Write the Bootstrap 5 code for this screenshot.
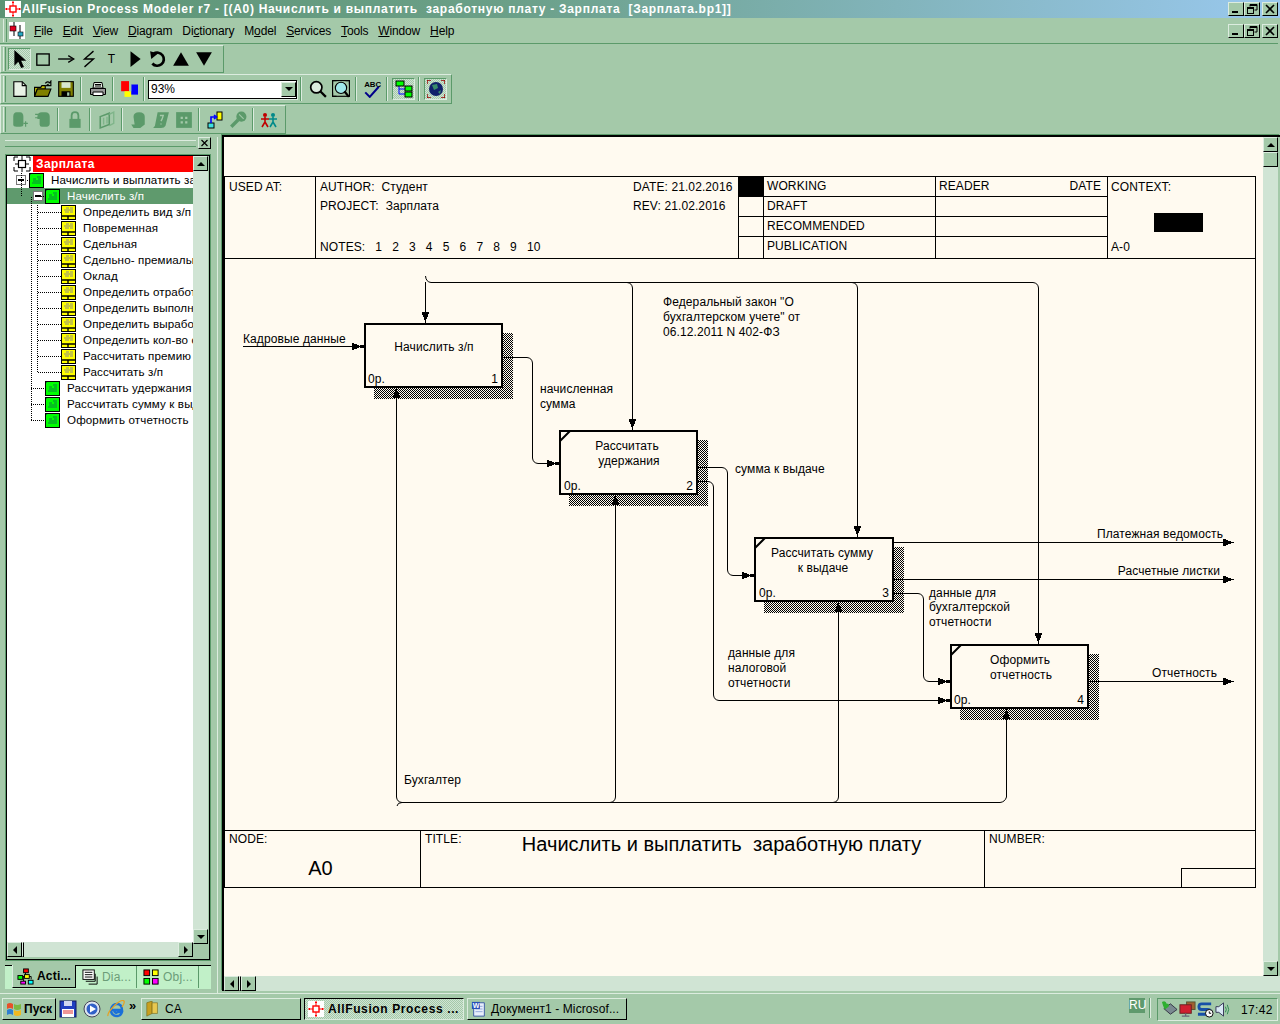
<!DOCTYPE html>
<html lang="ru">
<head>
<meta charset="UTF-8">
<title>AllFusion Process Modeler r7</title>
<link rel="stylesheet" href="https://cdn.jsdelivr.net/npm/bootstrap@5.3.0/dist/css/bootstrap.min.css">
<style>
:root { --fc: #a4c9a9; --dk: #5b9a6a; --lt: #d0e4d4; --hi: #dcecdf; --cream: #fffaf0; }
html, body { margin: 0; padding: 0; }
body { width: 1280px; height: 1024px; overflow: hidden; background: var(--fc); color: #000;
  font: 12px/14px "Liberation Sans", Arial, sans-serif; }
.app { width: 1280px; height: 1024px; }
.sprite { position: absolute; width: 0; height: 0; }

/* title and menu */
.titlebar { height: 18px; background: linear-gradient(90deg, #5c9474 0%, #6ba088 40%, #99c8ee 100%); color: #fff;
  font-weight: 700; font-size: 12px; letter-spacing: .72px; white-space: pre; padding-left: 5px; gap: 1px; }
.wbtn { width: 16px; height: 14px; background: var(--fc); border: 1px solid; border-color: var(--hi) #000 #000 var(--hi); }
.wbtn svg { width: 12px; height: 10px; display: block; margin: 1px; }
.wbtns { margin-left: auto; gap: 0; padding-right: 2px; }
.wbtns .wgap { margin-left: 2px; }
.menubar { height: 26px; border-bottom: 1px solid var(--dk); padding-left: 3px; margin-right: 2px; }
.grip { width: 4px; border-left: 1px solid var(--hi); border-right: 1px solid var(--dk); background: var(--fc); align-self: stretch; margin: 1px 0; }
.mlogo { width: 16px; height: 17px; margin: 0 4px 0 2px; background: #fff; }
.mitem { padding: 0 5px; font-size: 12px; letter-spacing: -.15px; }
.mitem u { text-underline-offset: 1px; }
.menubar .wbtns { padding-right: 0; margin-right: 0; }

/* toolbars */
.toolarea { height: 93px; padding-top: 1px; }
.toolrow { border: 1px solid; border-color: var(--hi) var(--dk) var(--dk) var(--hi); padding-left: 2px; }
.tr1 { width: 224px; height: 28px; margin-bottom: 1px; }
.tr2 { width: 452px; height: 30px; margin-bottom: 1px; }
.tr3 { width: 286px; height: 29px; }
.grip2 { width: 3px; border-left: 1px solid var(--hi); border-right: 1px solid var(--dk); align-self: stretch; margin: 1px 2px 1px 0; }
.tb { width: 23px; height: 22px; flex: none; }
.tb svg { width: 18px; height: 18px; }
.tb-press { background: repeating-conic-gradient(var(--lt) 0 25%, var(--fc) 0 50%) 0 0 / 2px 2px;
  border: 1px solid; border-color: var(--dk) var(--hi) var(--hi) var(--dk); }
.sep { width: 2px; flex: none; border-left: 1px solid var(--dk); border-right: 1px solid var(--hi); align-self: stretch; margin: 2px 3px; }
.sep-w { margin: 2px 4px 2px 3px; }
.combo { width: 149px; height: 19px; background: #fff; border: 1px solid #000; box-shadow: 1px 1px 0 var(--hi); flex: none; font-size: 12px; padding-left: 2px; }
.combo-b { width: 15px; height: 15px; margin: 1px 0 1px auto; background: var(--fc); border: 1px solid; border-color: var(--hi) #000 #000 var(--hi); }
.tri-d { width: 0; height: 0; border: 4px solid transparent; border-top-color: #000; border-bottom-width: 0; }
.tri-u { width: 0; height: 0; border: 4px solid transparent; border-bottom-color: #000; border-top-width: 0; }
.tri-l { width: 0; height: 0; border: 4px solid transparent; border-right-color: #000; border-left-width: 0; }
.tri-r { width: 0; height: 0; border: 4px solid transparent; border-left-color: #000; border-right-width: 0; }

/* workspace */
.workspace { height: 856px; }
.leftpane { width: 212px; flex: none; padding: 0 0 0 5px; }
.panehead { height: 18px; gap: 2px; }
.panelines { flex: 1; height: 7px; border-top: 1px solid var(--hi); border-bottom: 1px solid var(--dk); margin-top: 3px; position: relative; }
.xbtn { width: 13px; height: 12px; margin-top: 0; background: var(--fc); border: 1px solid; border-color: var(--hi) #000 #000 var(--hi); margin-right: 1px; }
.xbtn svg { width: 9px; height: 8px; display: block; margin: 1px; }
.treebox { width: 204px; height: 805px; border: 1px solid #000; border-left-color: #000; background: var(--fc); box-shadow: 0 0 0 1px var(--dk); margin-left: 1px; }
.treecol { width: 186px; flex: none; }
.tree { width: 186px; height: 786px; background: #fff; position: relative; overflow: hidden; }
.troot { height: 16px; position: relative; }
.troot svg { width: 18px; height: 16px; margin: 0 2px 0 6px; flex: none; }
.troot span { flex: 1; height: 16px; background: #f00; color: #fff; font-weight: 700; padding-left: 3px; font-size: 12px; letter-spacing: .4px; line-height: 16px; }
.trow { height: 16px; white-space: nowrap; position: relative; font-size: 11.6px; line-height: 16px; }
.trow svg { width: 15px; height: 15px; flex: none; }
.lv1 { padding-left: 22px; }
.lv2 { padding-left: 38px; }
.lv3 { padding-left: 54px; }
.trow span { padding-left: 7px; letter-spacing: .12px; }
.tsel { background: #5f9a6d; color: #fff; }
.treelines { position: absolute; left: 0; top: 0; width: 186px; height: 300px; pointer-events: none; }
.exp { position: absolute; width: 10px; height: 10px; background: #fff; border: 1px solid #777; top: 3px; }
.exp::after { content: ""; position: absolute; left: 1px; right: 1px; top: 3px; height: 2px; background: #000; }
.ex1 { left: 9px; }
.ex2 { left: 26px; }
.vscr { width: 15px; background: var(--lt); flex: none; }
.scb { width: 15px; height: 15px; background: var(--fc); border: 1px solid; border-color: var(--hi) #000 #000 var(--hi); flex: none; }
.hscr { height: 15px; background: var(--lt); flex: none; }
.corner { width: 15px; height: 15px; background: var(--fc); flex: none; }
.scthumb { height: 15px; background: var(--fc); border: 1px solid; border-color: var(--hi) #000 #000 var(--hi); flex: none; }
.tabs { height: 24px; margin-top: 5px; width: 206px; background: #c1f0c8; border-top: 1px solid #000; font-size: 12px; }
.tabgap { width: 7px; }
.tab { height: 22px; gap: 3px; color: #6c9d78; flex: none; letter-spacing: .2px; }
.tab svg { width: 17px; height: 17px; }
.tab-on { width: 64px; background: var(--fc); color: #000; font-weight: 700; border-bottom: 1px solid #000; border-right: 1px solid #000; border-left: 1px solid var(--hi); padding-left: 4px; margin-top: -1px; height: 23px; }
.tab-a { width: 61px; padding-left: 6px; border-right: 1px solid var(--dk); }
.tab-b { width: 62px; padding-left: 6px; border-right: 1px solid var(--dk); }
.split { width: 10px; flex: none; position: relative; }
.split::after { content: ""; position: absolute; left: 5px; top: 0; bottom: 0; width: 1px; background: var(--hi); }
.docpane { width: 1058px; flex: none; border-top: 2px solid #000; border-left: 2px solid #000; margin-top: -2px; height: 856px; box-shadow: -1px -1px 0 var(--dk); }
.viewrow { height: 839px; }
.viewport { width: 1039px; background: var(--cream); padding-top: 39px; flex: none; overflow: hidden; }
.vscr2 { width: 15px; flex: none; background: var(--lt); }
.vthumb { height: 15px; }

/* idef0 form */
.form { width: 1032px; height: 712px; border: 1px solid #000; font-size: 12px; letter-spacing: .1px; }
.fhead { height: 82px; border-bottom: 1px solid #000; flex: none; }
.c-used { width: 91px; border-right: 1px solid #000; padding: 3px 0 0 4px; }
.c-auth { width: 423px; border-right: 1px solid #000; padding: 3px 2px 0 4px; }
.auth-line { height: 19px; }
.auth-l { width: 313px; white-space: pre; }
.notes { margin-top: auto; padding-bottom: 4px; word-spacing: 1.6px; white-space: pre; }
.c-mark { width: 25px; border-right: 1px solid #000; }
.c-stat { width: 172px; border-right: 1px solid #000; }
.c-read { width: 172px; border-right: 1px solid #000; }
.strow { height: 20px; border-bottom: 1px solid #000; padding: 2px 6px 0 3px; flex: none; }
.strow:last-child { border-bottom: 0; height: 21px; flex: 1; }
.mk-on { background: #000; }
.c-ctx { flex: 1; padding: 3px 0 0 3px; position: relative; }
.ctxblk { width: 49px; height: 19px; background: #000; margin: 19px 0 0 43px; }
.ctxa { margin-top: auto; padding-bottom: 4px; }
.dsvg { display: block; width: 1030px; height: 571px; flex: none; }
.dsvg text { font: 12px "Liberation Sans", Arial, sans-serif; letter-spacing: .1px; fill: #000; }
.ln { fill: none; stroke: #000; stroke-width: 1; }
.bx { fill: var(--cream); stroke: #000; stroke-width: 2; }
.ffoot { flex: 1; border-top: 1px solid #000; min-height: 0; }
.c-node { width: 196px; border-right: 1px solid #000; padding: 1px 0 0 4px; position: relative; }
.a0 { font-size: 20px; line-height: 24px; text-align: center; margin: 10px 0 0 -4px; padding-right: 4px; letter-spacing: 0; }
.c-title { width: 564px; border-right: 1px solid #000; padding: 1px 0 0 4px; position: relative; }
.bigt { font-size: 20px; line-height: 24px; text-align: center; margin-top: -14px; letter-spacing: .02px; white-space: pre; padding-left: 34px; }
.c-num { flex: 1; padding: 1px 0 0 4px; position: relative; }
.numbox { position: absolute; right: 0; bottom: 0; width: 74px; height: 19px; border: 1px solid #000; border-right: 0; border-bottom: 0; }

/* taskbar */
.taskbar { height: 30px; border-top: 1px solid var(--hi); box-shadow: inset 0 1px 0 var(--fc); padding: 4px 2px 3px 2px; position: relative; }
.taskbar::before { content: ""; position: absolute; left: 0; right: 0; top: 1px; height: 1px; background: var(--fc); }
.startb { width: 54px; height: 22px; font-weight: 700; gap: 2px; padding-left: 3px; border: 1px solid; border-color: var(--hi) #000 #000 var(--hi); flex: none; letter-spacing: .1px; }
.startb svg { width: 16px; height: 16px; }
.ql { width: 24px; height: 22px; flex: none; }
.ql svg { width: 18px; height: 18px; }
.chev { width: 12px; height: 22px; font-size: 13px; font-weight: 700; line-height: 16px; flex: none; padding-left: 1px; }
.tsk { height: 22px; gap: 4px; padding-left: 3px; border: 1px solid; border-color: var(--hi) #000 #000 var(--hi); flex: none; white-space: nowrap; overflow: hidden; }
.tsk svg { width: 16px; height: 16px; flex: none; }
.t1 { width: 160px; margin-left: 1px; }
.t2 { width: 160px; margin-left: 3px; font-weight: 700; letter-spacing: .62px; background: repeating-conic-gradient(var(--lt) 0 25%, var(--fc) 0 50%) 0 0 / 2px 2px; border-color: #000 var(--hi) var(--hi) #000; }
.t3 { width: 160px; margin-left: 3px; letter-spacing: .1px; }
.rublk { width: 16px; height: 15px; background: #5f9a6d; color: #fff; margin-left: auto; font-size: 12px; line-height: 15px; text-align: center; }
.tsep { width: 2px; height: 20px; border-left: 1px solid var(--dk); border-right: 1px solid var(--hi); margin: 0 6px 0 4px; }
.tray { width: 121px; height: 23px; border: 1px solid; border-color: var(--dk) var(--hi) var(--hi) var(--dk); gap: 1px; padding-left: 3px; flex: none; margin-left: 0; }
.tray svg { width: 17px; height: 17px; flex: none; }
.clock { margin-left: 8px; letter-spacing: .35px; }
</style>
</head>
<body>
<svg class="sprite" aria-hidden="true" shape-rendering="crispEdges">
  <defs>
    <pattern id="dith" width="2" height="2" patternUnits="userSpaceOnUse"><rect width="2" height="2" fill="#fffaf0"/><rect width="1" height="1" fill="#000"/><rect x="1" y="1" width="1" height="1" fill="#000"/></pattern>
    <marker id="ah" markerUnits="userSpaceOnUse" markerWidth="13" markerHeight="10" refX="12" refY="5" orient="auto"><path d="M0 1L9 5L0 9Z M8 3.5H12V6.5H8Z" fill="#000"/></marker>
    <marker id="ao" markerUnits="userSpaceOnUse" markerWidth="13" markerHeight="10" refX="11" refY="5" orient="auto"><path d="M0 1L10 5L0 9Z" fill="#000"/></marker>
  </defs>
  <symbol id="i-logo" viewBox="0 0 16 16"><rect width="16" height="16" fill="#fff"/><path d="M8 0V5M8 11V16M0 8H5M11 8H16" stroke="#f00" fill="none"/><rect x="5" y="5" width="6" height="6" fill="#fff" stroke="#f00" stroke-width="1.4"/><path d="M7 2H9V1H7ZM7 14H9V15H7ZM2 7V9H1V7ZM14 7V9H15V7Z" fill="#f00"/></symbol>
  <symbol id="i-mlogo" viewBox="0 0 16 17"><path d="M5 0V14M11 3V17" stroke="#000" fill="none"/><rect x="1" y="4" width="6" height="5" fill="#e00020" stroke="#000" stroke-width=".6"/><rect x="9" y="10" width="5" height="4" fill="#27a9c4" stroke="#000" stroke-width=".6"/></symbol>
  <symbol id="i-green" viewBox="0 0 15 15"><rect x=".5" y=".5" width="14" height="14" fill="#0f0" stroke="#000"/><path d="M2 1L1 2M8 4H12M4 6H7M9 6H12M4 8H12M3 10H12" stroke="#0a8040" fill="none"/></symbol>
  <symbol id="i-yellow" viewBox="0 0 15 15"><rect x=".5" y=".5" width="14" height="14" fill="#ff0" stroke="#000"/><path d="M5 3H8M9 3H12M3 5H12M4 7H8M9 7H12" stroke="#888" fill="none"/><path d="M0 11H15M7 11V15" stroke="#000" fill="none" stroke-width="1.4"/></symbol>
  <symbol id="i-proj" viewBox="0 0 18 16"><path d="M1 5V1H5M13 1H17V5M1 11V15H5M13 15H17V11M9 0V4M9 12V16M2 8H5M13 8H16" stroke="#000" fill="none"/><rect x="5.5" y="4.5" width="7" height="7" fill="#fff" stroke="#000" stroke-width="1.2"/></symbol>
  <symbol id="t-ptr" viewBox="0 0 16 16"><path d="M3 0V14L6.5 10.5L9 16L11.5 15L9 9.5H13.500Z" fill="#000"/></symbol>
  <symbol id="t-rect" viewBox="0 0 16 16"><rect x="2.500" y="3.500" width="11" height="10" fill="none" stroke="#000" stroke-width="1.200"/></symbol>
  <symbol id="t-arr" viewBox="0 0 16 16"><path d="M1 8H14" stroke="#000" stroke-width="1.200"/><path d="M10 5L15 8L10 11" fill="none" stroke="#000" stroke-width="1.200"/></symbol>
  <symbol id="t-sq" viewBox="0 0 16 16"><path d="M12 1L4 8H12L4 15" fill="none" stroke="#000" stroke-width="1.200"/></symbol>
  <symbol id="t-play" viewBox="0 0 16 16"><path d="M4 1L13 8L4 15Z" fill="#000"/></symbol>
  <symbol id="t-rot" viewBox="0 0 16 16"><path d="M4 3.500A5.800 5.800 0 1 1 3 12" fill="none" stroke="#000" stroke-width="2.400"/><path d="M1 1L8 3L2 8Z" fill="#000"/></symbol>
  <symbol id="t-up" viewBox="0 0 16 16"><path d="M8 2L15 14H1Z" fill="#000"/></symbol>
  <symbol id="t-down" viewBox="0 0 16 16"><path d="M1 2H15L8 14Z" fill="#000"/></symbol>
  <symbol id="t-new" viewBox="0 0 16 16"><path d="M2.500 1.500H10L13.500 5V14.500H2.500Z" fill="#e8f2e6" stroke="#000"/><path d="M10 1.500V5H13.500" fill="none" stroke="#000"/></symbol>
  <symbol id="t-open" viewBox="0 0 16 16"><path d="M.5 6.500H6L7 5H10V8H3L.5 14.500Z" fill="#c8c800" stroke="#000"/><path d="M.5 14.500L3 8H15L12.500 14.500Z" fill="#808000" stroke="#000"/><path d="M10 3Q12 .5 14 2.500L15 1V5H11L13 3.500" fill="none" stroke="#000"/></symbol>
  <symbol id="t-save" viewBox="0 0 16 16"><rect x="1.500" y="1.500" width="13" height="13" fill="#808000" stroke="#000"/><rect x="4" y="2" width="8" height="5" fill="#d8e8d0"/><rect x="4" y="10" width="8" height="4.500" fill="#000"/><rect x="9" y="11" width="2" height="3" fill="#a4c9a9"/></symbol>
  <symbol id="t-print" viewBox="0 0 18 16"><path d="M5 1.500H13L14 7H4Z" fill="#e8f2e6" stroke="#000"/><path d="M1.500 7.500H16.500V13.500H1.500Z" fill="#9a9a9a" stroke="#000"/><path d="M4 11H14V14.500H4Z" fill="#fff" stroke="#000"/><path d="M6 3.500H12M6 5H12" stroke="#000" fill="none"/></symbol>
  <symbol id="t-col" viewBox="0 0 16 16"><rect x="1" y="1" width="7" height="9" fill="#f00"/><rect x="4" y="10" width="6" height="5" fill="#ff0"/><rect x="10" y="4" width="6" height="9" fill="#00f"/><rect x="8" y="4" width="2" height="6" fill="#a4c9a9"/></symbol>
  <symbol id="t-zoom" viewBox="0 0 16 16"><circle cx="6.500" cy="6.500" r="5" fill="#dcecdf" stroke="#000" stroke-width="1.500"/><path d="M10 10L15 15" stroke="#000" stroke-width="2"/></symbol>
  <symbol id="t-fit" viewBox="0 0 16 16"><path d="M.5 4V.5H4M12 .5H15.500V4M.5 11V14.500H4" fill="none" stroke="#000"/><rect x=".5" y=".5" width="15" height="14" fill="none" stroke="#000"/><circle cx="8" cy="7" r="5" fill="#9fe8ea" stroke="#000"/><path d="M11 10L15 15" stroke="#000" stroke-width="2"/></symbol>
  <symbol id="t-abc" viewBox="0 0 16 16"><text x="1" y="6.500" font-family="Liberation Sans" font-size="7" font-weight="700" fill="#000">ABC</text><path d="M2 11L6 15L14 6" fill="none" stroke="#00008a" stroke-width="1.800"/></symbol>
  <symbol id="t-tree" viewBox="0 0 18 18"><path d="M4 6V14H10M4 9H10" fill="none" stroke="#00f"/><rect x="1" y="1" width="8" height="5" fill="#0f0" stroke="#000"/><rect x="10" y="6" width="7" height="5" fill="#0f0" stroke="#000"/><rect x="10" y="12" width="7" height="5" fill="#0f0" stroke="#000"/></symbol>
  <symbol id="t-globe" viewBox="0 0 18 18"><circle cx="9" cy="9" r="7" fill="#10206a"/><path d="M5 5L10 4L11 8L7 10ZM11 12L14 10L13 14Z" fill="#3a8c6a"/><path d="M0 4V0H4M14 0H18V4M0 14V18H4M14 18H18V14" fill="none" stroke="#900" stroke-width="1.400"/></symbol>
  <symbol id="d-a" viewBox="0 0 16 16"><path d="M2 5Q2 1 5 1H8Q11 1 11 5V12Q11 14 8 14H5Q2 14 2 12Z" fill="#5b9a6a"/><path d="M11 11H15M13 9V14" stroke="#5b9a6a" fill="none"/></symbol>
  <symbol id="d-b" viewBox="0 0 16 16"><path d="M3 5Q3 1 7 1H10Q14 1 14 5V11Q14 14 10 14H7Q5 14 5 12V7H3Z" fill="#5b9a6a"/><path d="M1 3H5M1 6H4" stroke="#5b9a6a" fill="none"/></symbol>
  <symbol id="d-lock" viewBox="0 0 16 16"><rect x="3" y="7" width="10" height="8" fill="#5b9a6a"/><path d="M5 7V4Q5 1 8 1Q11 1 11 4V7" fill="none" stroke="#5b9a6a" stroke-width="1.600"/></symbol>
  <symbol id="d-book" viewBox="0 0 16 16"><path d="M2 5L10 2V12L2 15Z" fill="none" stroke="#5b9a6a" stroke-width="1.400"/><path d="M10 3L14 1V11L10 13M5 6V12M8 5V11" fill="none" stroke="#7fb58a" stroke-width="1.200"/></symbol>
  <symbol id="d-blob" viewBox="0 0 16 16"><path d="M4 5Q4 1 9 1Q14 1 14 5V12L10 15H4L2 12H5Z" fill="#5b9a6a"/></symbol>
  <symbol id="d-scroll" viewBox="0 0 16 16"><path d="M5 1H15L12 13Q11 15 8 15H1Q3 14 3 11Z" fill="#5b9a6a"/><path d="M7 4L10 4L9 7L8 9M8 11V12" stroke="#a4c9a9" fill="none" stroke-width="1.200"/></symbol>
  <symbol id="d-grid" viewBox="0 0 16 16"><rect x="1" y="1" width="14" height="14" fill="#5b9a6a"/><path d="M5 5H7V7H5ZM9 5H11V7H9ZM5 9H7V11H5ZM9 9H11V11H9Z" fill="#a4c9a9"/></symbol>
  <symbol id="d-db" viewBox="0 0 18 18"><rect x="11" y="1" width="5" height="8" fill="#ff0" stroke="#000"/><rect x="2" y="12" width="6" height="5" fill="#40e0e0" stroke="#000"/><path d="M5 12V6H9M8 4L10.500 6L8 8" fill="none" stroke="#00f" stroke-width="1.600"/></symbol>
  <symbol id="d-key" viewBox="0 0 16 16"><circle cx="11" cy="5" r="4.500" fill="#5b9a6a"/><path d="M8 8L2 14" stroke="#5b9a6a" stroke-width="3"/><path d="M9 3L13 7" stroke="#a4c9a9"/></symbol>
  <symbol id="d-ppl" viewBox="0 0 18 16"><circle cx="5" cy="3" r="2" fill="#c00000"/><path d="M5 5V10L2 15M5 10L8 15M1 7H9" stroke="#c00000" stroke-width="1.600" fill="none"/><circle cx="13" cy="3" r="2" fill="#008a8a"/><path d="M13 5V10L10 15M13 10L16 15M9 7H17" stroke="#008a8a" stroke-width="1.600" fill="none"/></symbol>
  <symbol id="w-min" viewBox="0 0 12 10"><rect x="2" y="7" width="6" height="2" fill="#000"/></symbol>
  <symbol id="w-res" viewBox="0 0 12 10"><path d="M4 2.500V.5H11V6H8.500M4 1.500H11" fill="none" stroke="#000"/><rect x="1.500" y="3.500" width="6" height="6" fill="none" stroke="#000"/><path d="M1 4.500H8" stroke="#000"/></symbol>
  <symbol id="w-x" viewBox="0 0 12 10"><path d="M2 1L10 9M10 1L2 9" stroke="#000" stroke-width="1.600"/></symbol>
  <symbol id="b-win" viewBox="0 0 16 16"><path d="M1 3Q4 1 7 3V8Q4 6 1 8Z" fill="#e8502a"/><path d="M8 3Q11 5 15 3V8Q11 10 8 8Z" fill="#7cb842"/><path d="M1 9Q4 7 7 9V14Q4 12 1 14Z" fill="#2f7fd0"/><path d="M8 9Q11 11 15 9V14Q11 16 8 14Z" fill="#f0b820"/></symbol>
  <symbol id="b-disk" viewBox="0 0 18 18"><rect x="1" y="1" width="16" height="16" fill="#2040c0" stroke="#101860"/><rect x="5" y="1" width="8" height="5" fill="#d0d8f0"/><rect x="3" y="9" width="12" height="8" fill="#fff"/><path d="M4 11H14M4 13H14" stroke="#e03030"/></symbol>
  <symbol id="b-wmp" viewBox="0 0 18 18"><circle cx="9" cy="9" r="8" fill="#dde6f0" stroke="#445"/><circle cx="9" cy="9" r="5.500" fill="#3060c8"/><path d="M7 5.500L13 9L7 12.500Z" fill="#fff"/></symbol>
  <symbol id="b-ie" viewBox="0 0 18 18"><path d="M4 10H15Q15 4 10 4Q5 4 4 10Q4 16 10 16Q14 16 15 12H11Q9 14 7 11" fill="none" stroke="#1a70d8" stroke-width="2.400"/><path d="M1 16Q0 13 8 5Q15 -1 17 1Q18 3 15 7" fill="none" stroke="#e8a020" stroke-width="1.300"/></symbol>
  <symbol id="b-fold" viewBox="0 0 16 18"><path d="M1 2L7 0V14L1 17Z" fill="#c8a020" stroke="#6a5a10" stroke-width=".6"/><path d="M7 2H13V14H7Z" fill="#e8c850" stroke="#6a5a10" stroke-width=".6"/></symbol>
  <symbol id="b-word" viewBox="0 0 16 18"><path d="M2 2H14V17H2Z" fill="#e8eefc" stroke="#3050a0"/><path d="M4 6H12M4 9H12M4 12H12" stroke="#8aa0d8"/><rect x="0" y="1" width="9" height="8" fill="#2850b8"/><text x="1" y="8" font-size="8" font-weight="700" font-family="Liberation Sans" fill="#fff">W</text></symbol>
  <symbol id="s-1" viewBox="0 0 18 18"><path d="M3 8L10 14L17 9L10 3Z" fill="#7a8a90" stroke="#334"/><path d="M1 1Q5 -1 6 3Q9 2 8 6L4 9Q2 5 1 1Z" fill="#2fb030"/></symbol>
  <symbol id="s-2" viewBox="0 0 18 18"><rect x="8" y="1" width="9" height="8" fill="#a06030" stroke="#553"/><rect x="1" y="4" width="12" height="9" fill="#d02030" stroke="#622"/><path d="M7 13V16M3 16H11" stroke="#667" stroke-width="1.400"/></symbol>
  <symbol id="s-3" viewBox="0 0 18 18"><path d="M15 3H5Q2 3 2 6T5 9H11Q14 9 14 11T11 14H1" fill="none" stroke="#1850a8" stroke-width="3"/><circle cx="13" cy="13" r="4" fill="#fff" stroke="#000"/><path d="M13 11V13H15" fill="none" stroke="#000"/></symbol>
  <symbol id="s-4" viewBox="0 0 18 18"><path d="M1 6H4L9 2V16L4 12H1Z" fill="#d8e8f4" stroke="#335"/><path d="M11 6Q13 9 11 12M13 4Q16 9 13 14" fill="none" stroke="#2a8a50"/></symbol>
  <symbol id="tb-act" viewBox="0 0 18 18"><path d="M9 5V9M3 12V9H15V12M7 9V14" stroke="#000" fill="none"/><rect x="7" y="1" width="5" height="4" fill="#f00" stroke="#000"/><rect x="1" y="8" width="5" height="4" fill="#0f0" stroke="#000"/><rect x="8" y="7" width="5" height="4" fill="#ff0" stroke="#000"/><rect x="4" y="14" width="5" height="3" fill="#f0f" stroke="#000"/><rect x="12" y="13" width="5" height="4" fill="#0ff" stroke="#000"/></symbol>
  <symbol id="tb-dia" viewBox="0 0 18 18"><rect x="1" y="1" width="12" height="10" fill="#fff" stroke="#000"/><path d="M3 3.500H11M3 6H11M3 8.500H11" stroke="#000"/><path d="M14 5V13H4M16 8V16H7" fill="none" stroke="#000"/></symbol>
  <symbol id="tb-obj" viewBox="0 0 18 18"><rect x="1" y="1" width="6" height="6" fill="#f00" stroke="#000"/><rect x="10" y="1" width="6" height="6" fill="#ff0" stroke="#000"/><rect x="1" y="10" width="6" height="6" fill="#0f0" stroke="#000"/><rect x="10" y="10" width="6" height="6" fill="#f0f" stroke="#000"/></symbol>
</svg>

<div class="app d-flex flex-column">
  <!-- title -->
  <div class="titlebar d-flex align-items-center">
    <svg width="16" height="16" class="flex-none me-0"><use href="#i-logo"/></svg>
    <span>AllFusion Process Modeler r7 - [(A0) Начислить и выплатить  заработную плату - Зарплата  [Зарплата.bp1]]</span>
    <div class="wbtns d-flex">
      <div class="wbtn"><svg><use href="#w-min"/></svg></div>
      <div class="wbtn"><svg><use href="#w-res"/></svg></div>
      <div class="wbtn wgap"><svg><use href="#w-x"/></svg></div>
    </div>
  </div>

  <!-- menu -->
  <div class="menubar d-flex align-items-center">
    <div class="grip"></div>
    <svg class="mlogo"><use href="#i-mlogo"/></svg>
    <div class="mitem"><u>F</u>ile</div>
    <div class="mitem"><u>E</u>dit</div>
    <div class="mitem"><u>V</u>iew</div>
    <div class="mitem"><u>D</u>iagram</div>
    <div class="mitem">Di<u>c</u>tionary</div>
    <div class="mitem">M<u>o</u>del</div>
    <div class="mitem"><u>S</u>ervices</div>
    <div class="mitem"><u>T</u>ools</div>
    <div class="mitem"><u>W</u>indow</div>
    <div class="mitem"><u>H</u>elp</div>
    <div class="wbtns d-flex">
      <div class="wbtn"><svg><use href="#w-min"/></svg></div>
      <div class="wbtn"><svg><use href="#w-res"/></svg></div>
      <div class="wbtn wgap"><svg><use href="#w-x"/></svg></div>
    </div>
  </div>

  <!-- toolbars -->
  <div class="toolarea">
    <div class="toolrow tr1 d-flex align-items-center">
      <div class="grip2"></div>
      <div class="tb tb-press d-flex align-items-center justify-content-center"><svg><use href="#t-ptr"/></svg></div>
      <div class="tb d-flex align-items-center justify-content-center"><svg><use href="#t-rect"/></svg></div>
      <div class="tb d-flex align-items-center justify-content-center"><svg><use href="#t-arr"/></svg></div>
      <div class="tb d-flex align-items-center justify-content-center"><svg><use href="#t-sq"/></svg></div>
      <div class="tb d-flex align-items-center justify-content-center ttool">T</div>
      <div class="tb d-flex align-items-center justify-content-center"><svg><use href="#t-play"/></svg></div>
      <div class="tb d-flex align-items-center justify-content-center"><svg><use href="#t-rot"/></svg></div>
      <div class="tb d-flex align-items-center justify-content-center"><svg><use href="#t-up"/></svg></div>
      <div class="tb d-flex align-items-center justify-content-center"><svg><use href="#t-down"/></svg></div>
    </div>
    <div class="toolrow tr2 d-flex align-items-center">
      <div class="grip2"></div>
      <div class="tb d-flex align-items-center justify-content-center"><svg><use href="#t-new"/></svg></div>
      <div class="tb d-flex align-items-center justify-content-center"><svg><use href="#t-open"/></svg></div>
      <div class="tb d-flex align-items-center justify-content-center"><svg><use href="#t-save"/></svg></div>
      <div class="sep sep-w"></div>
      <div class="tb d-flex align-items-center justify-content-center"><svg><use href="#t-print"/></svg></div>
      <div class="sep"></div>
      <div class="tb d-flex align-items-center justify-content-center"><svg><use href="#t-col"/></svg></div>
      <div class="sep"></div>
      <div class="combo d-flex align-items-center">93%<div class="combo-b d-flex align-items-center justify-content-center"><div class="tri-d"></div></div></div>
      <div class="sep sep-w"></div>
      <div class="tb d-flex align-items-center justify-content-center"><svg><use href="#t-zoom"/></svg></div>
      <div class="tb d-flex align-items-center justify-content-center"><svg><use href="#t-fit"/></svg></div>
      <div class="sep"></div>
      <div class="tb d-flex align-items-center justify-content-center"><svg><use href="#t-abc"/></svg></div>
      <div class="sep sep-w"></div>
      <div class="tb tb-press d-flex align-items-center justify-content-center"><svg><use href="#t-tree"/></svg></div>
      <div class="sep sep-w"></div>
      <div class="tb tb-press d-flex align-items-center justify-content-center"><svg><use href="#t-globe"/></svg></div>
    </div>
    <div class="toolrow tr3 d-flex align-items-center">
      <div class="grip2"></div>
      <div class="tb d-flex align-items-center justify-content-center"><svg><use href="#d-a"/></svg></div>
      <div class="tb d-flex align-items-center justify-content-center"><svg><use href="#d-b"/></svg></div>
      <div class="sep sep-w"></div>
      <div class="tb d-flex align-items-center justify-content-center"><svg><use href="#d-lock"/></svg></div>
      <div class="sep sep-w"></div>
      <div class="tb d-flex align-items-center justify-content-center"><svg><use href="#d-book"/></svg></div>
      <div class="sep"></div>
      <div class="tb d-flex align-items-center justify-content-center"><svg><use href="#d-blob"/></svg></div>
      <div class="tb d-flex align-items-center justify-content-center"><svg><use href="#d-scroll"/></svg></div>
      <div class="tb d-flex align-items-center justify-content-center"><svg><use href="#d-grid"/></svg></div>
      <div class="sep"></div>
      <div class="tb d-flex align-items-center justify-content-center"><svg><use href="#d-db"/></svg></div>
      <div class="tb d-flex align-items-center justify-content-center"><svg><use href="#d-key"/></svg></div>
      <div class="sep"></div>
      <div class="tb d-flex align-items-center justify-content-center"><svg><use href="#d-ppl"/></svg></div>
    </div>
  </div>

  <!-- workspace -->
  <div class="workspace d-flex">
    <div class="leftpane">
      <div class="panehead d-flex">
        <div class="panelines"></div>
        <div class="xbtn"><svg><use href="#w-x"/></svg></div>
      </div>
      <div class="treebox d-flex flex-wrap">
        <div class="treecol">
          <div class="tree">
            <div class="troot d-flex align-items-center"><svg><use href="#i-proj"/></svg><span>Зарплата</span></div>
            <div class="trow lv1 d-flex align-items-center"><div class="exp ex1"></div><svg><use href="#i-green"/></svg><span>Начислить и выплатить  заработную плату</span></div>
            <div class="trow lv2 tsel d-flex align-items-center"><div class="exp ex2"></div><svg><use href="#i-green"/></svg><span>Начислить з/п</span></div>
            <div class="trow lv3 d-flex align-items-center"><svg><use href="#i-yellow"/></svg><span>Определить вид з/п</span></div>
            <div class="trow lv3 d-flex align-items-center"><svg><use href="#i-yellow"/></svg><span>Повременная</span></div>
            <div class="trow lv3 d-flex align-items-center"><svg><use href="#i-yellow"/></svg><span>Сдельная</span></div>
            <div class="trow lv3 d-flex align-items-center"><svg><use href="#i-yellow"/></svg><span>Сдельно- премиальная</span></div>
            <div class="trow lv3 d-flex align-items-center"><svg><use href="#i-yellow"/></svg><span>Оклад</span></div>
            <div class="trow lv3 d-flex align-items-center"><svg><use href="#i-yellow"/></svg><span>Определить отработанное</span></div>
            <div class="trow lv3 d-flex align-items-center"><svg><use href="#i-yellow"/></svg><span>Определить выполнение</span></div>
            <div class="trow lv3 d-flex align-items-center"><svg><use href="#i-yellow"/></svg><span>Определить выработку</span></div>
            <div class="trow lv3 d-flex align-items-center"><svg><use href="#i-yellow"/></svg><span>Определить кол-во отпускных</span></div>
            <div class="trow lv3 d-flex align-items-center"><svg><use href="#i-yellow"/></svg><span>Рассчитать  премию</span></div>
            <div class="trow lv3 d-flex align-items-center"><svg><use href="#i-yellow"/></svg><span>Рассчитать з/п</span></div>
            <div class="trow lv2 d-flex align-items-center"><svg><use href="#i-green"/></svg><span>Рассчитать  удержания</span></div>
            <div class="trow lv2 d-flex align-items-center"><svg><use href="#i-green"/></svg><span>Рассчитать сумму  к выдаче</span></div>
            <div class="trow lv2 d-flex align-items-center"><svg><use href="#i-green"/></svg><span>Оформить  отчетность</span></div>
            <svg class="treelines" viewBox="0 0 186 300" shape-rendering="crispEdges">
              <g fill="none" stroke="#000" stroke-dasharray="1 1">
                <path d="M14.500 17V40M20 24.500H22M24 41V265M30 40.500H38"/>
                <path d="M30.500 49V217M31 56.500H54M31 72.500H54M31 88.500H54M31 104.500H54M31 120.500H54M31 136.500H54M31 152.500H54M31 168.500H54M31 184.500H54M31 200.500H54M31 216.500H54"/>
                <path d="M24 232.500H38M24 248.500H38M24 264.500H38"/>
              </g>
            </svg>
          </div>
          <div class="hscr d-flex">
            <div class="scb d-flex align-items-center justify-content-center"><div class="tri-l"></div></div>
            <div class="scthumb thumb-l"></div>
            <div class="scb ms-auto d-flex align-items-center justify-content-center"><div class="tri-r"></div></div>
          </div>
        </div>
        <div class="vscr d-flex flex-column">
          <div class="scb d-flex align-items-center justify-content-center"><div class="tri-u tri-dim"></div></div>
          <div class="scb mt-auto d-flex align-items-center justify-content-center"><div class="tri-d tri-dim"></div></div>
          <div class="corner"></div>
        </div>
      </div>
      <div class="tabs d-flex">
        <div class="tabgap"></div>
        <div class="tab tab-on d-flex align-items-center"><svg><use href="#tb-act"/></svg>Acti...</div>
        <div class="tab tab-a d-flex align-items-center"><svg><use href="#tb-dia"/></svg>Dia...</div>
        <div class="tab tab-b d-flex align-items-center"><svg><use href="#tb-obj"/></svg>Obj...</div>
      </div>
    </div>
    <div class="split"></div>

    <!-- document -->
    <div class="docpane">
      <div class="viewrow d-flex">
        <div class="viewport">
          <div class="form d-flex flex-column">
            <div class="fhead d-flex">
              <div class="c-used">USED AT:</div>
              <div class="c-auth d-flex flex-column">
                <div class="auth-line d-flex"><div class="auth-l">AUTHOR:  Студент</div><div>DATE:  21.02.2016</div></div>
                <div class="auth-line d-flex"><div class="auth-l">PROJECT:  Зарплата</div><div>REV:    21.02.2016</div></div>
                <div class="notes">NOTES:  1  2  3  4  5  6  7  8  9  10</div>
              </div>
              <div class="c-mark d-flex flex-column">
                <div class="strow mk-on"></div><div class="strow"></div><div class="strow"></div><div class="strow"></div>
              </div>
              <div class="c-stat d-flex flex-column">
                <div class="strow">WORKING</div><div class="strow">DRAFT</div><div class="strow">RECOMMENDED</div><div class="strow">PUBLICATION</div>
              </div>
              <div class="c-read d-flex flex-column">
                <div class="strow d-flex justify-content-between"><span>READER</span><span>DATE</span></div><div class="strow"></div><div class="strow"></div><div class="strow"></div>
              </div>
              <div class="c-ctx d-flex flex-column">
                <div>CONTEXT:</div>
                <div class="ctxblk"></div>
                <div class="ctxa">A-0</div>
              </div>
            </div>

            <svg class="dsvg" viewBox="225 259 1030 571">
              <g shape-rendering="crispEdges">
                <rect x="374" y="333" width="139" height="66" fill="url(#dith)"/>
                <rect x="569" y="440" width="139" height="66" fill="url(#dith)"/>
                <rect x="764" y="547" width="140" height="66" fill="url(#dith)"/>
                <rect x="960" y="654" width="139" height="66" fill="url(#dith)"/>
              </g>
              <g class="arrows">
                <!-- control -->
                <path class="ln" d="M425.500 276Q426 282 431 282.500H1033Q1038 283 1038.500 288V644" marker-end="url(#ao)"/>
                <path class="ln" d="M425.500 282V323" marker-end="url(#ao)"/>
                <path class="ln" d="M627 282.500Q632 283 632.500 288V430" marker-end="url(#ao)"/>
                <path class="ln" d="M852 282.500Q857 283 857.500 288V537" marker-end="url(#ao)"/>
                <!-- inputs, outputs -->
                <path class="ln" d="M243 346.500H364" marker-end="url(#ah)"/>
                <path class="ln" d="M502 357.500H527Q532 358 532.500 363V458Q533 463 538 463.500H559" marker-end="url(#ah)"/>
                <path class="ln" d="M697 467.500H722Q727 468 727.500 473V570Q728 575 733 575.500H754" marker-end="url(#ah)"/>
                <path class="ln" d="M697 481.500H708Q713 482 713.500 487V695Q714 700 719 700.500H950" marker-end="url(#ah)"/>
                <path class="ln" d="M893 542.500H1234" marker-end="url(#ao)"/>
                <path class="ln" d="M893 579.500H1234" marker-end="url(#ao)"/>
                <path class="ln" d="M893 593.500H918Q923 594 923.500 599V676Q924 681 929 681.500H950" marker-end="url(#ah)"/>
                <path class="ln" d="M1088 681.500H1234" marker-end="url(#ao)"/>
                <!-- mechanisms -->
                <path class="ln" d="M397 806Q397.500 802.500 402 802.500H1000Q1005 802 1006.500 797V708" marker-end="url(#ao)"/>
                <path class="ln" d="M402 802.500Q397 802 396.500 797V387" marker-end="url(#ao)"/>
                <path class="ln" d="M610 802.500Q615 802 615.500 797V494" marker-end="url(#ao)"/>
                <path class="ln" d="M833 802.500Q838 802 838.500 797V601" marker-end="url(#ao)"/>
              </g>
              <!-- boxes -->
              <g shape-rendering="crispEdges">
                <rect class="bx" x="365" y="324" width="137" height="63"/>
                <rect class="bx" x="560" y="431" width="137" height="63"/>
                <rect class="bx" x="755" y="538" width="138" height="63"/>
                <rect class="bx" x="951" y="645" width="137" height="63"/>
              </g>
              <path d="M560 441L570 431M755 548L765 538M951 655L961 645" stroke="#000" stroke-width="2" fill="none"/>
              <g>
                <text x="434" y="351" text-anchor="middle">Начислить з/п</text>
                <text x="368" y="383">0р.</text><text x="498" y="383" text-anchor="end">1</text>
                <text x="627" y="450" text-anchor="middle">Рассчитать</text><text x="629" y="465" text-anchor="middle">удержания</text>
                <text x="564" y="490">0р.</text><text x="693" y="490" text-anchor="end">2</text>
                <text x="822" y="557" text-anchor="middle">Рассчитать сумму</text><text x="823" y="572" text-anchor="middle">к выдаче</text>
                <text x="759" y="597">0р.</text><text x="889" y="597" text-anchor="end">3</text>
                <text x="1020" y="664" text-anchor="middle">Оформить</text><text x="1021" y="679" text-anchor="middle">отчетность</text>
                <text x="954" y="704">0р.</text><text x="1084" y="704" text-anchor="end">4</text>
                <text x="243" y="343">Кадровые данные</text>
                <text x="540" y="393">начисленная</text><text x="540" y="408">сумма</text>
                <text x="663" y="306">Федеральный закон "О</text><text x="663" y="321">бухгалтерском учете" от</text><text x="663" y="336">06.12.2011 N 402-ФЗ</text>
                <text x="735" y="473">сумма к выдаче</text>
                <text x="1223" y="538" text-anchor="end">Платежная ведомость</text>
                <text x="1220" y="575" text-anchor="end">Расчетные листки</text>
                <text x="929" y="597">данные для</text><text x="929" y="611">бухгалтерской</text><text x="929" y="626">отчетности</text>
                <text x="728" y="657">данные для</text><text x="728" y="672">налоговой</text><text x="728" y="687">отчетности</text>
                <text x="1217" y="677" text-anchor="end">Отчетность</text>
                <text x="404" y="784">Бухгалтер</text>
              </g>
            </svg>

            <div class="ffoot d-flex">
              <div class="c-node">NODE:<div class="a0">A0</div></div>
              <div class="c-title">TITLE:<div class="bigt">Начислить и выплатить  заработную плату</div></div>
              <div class="c-num">NUMBER:<div class="numbox"></div></div>
            </div>
          </div>
        </div>
        <div class="vscr2 d-flex flex-column">
          <div class="scb d-flex align-items-center justify-content-center"><div class="tri-u"></div></div>
          <div class="scthumb vthumb"></div>
          <div class="scb mt-auto d-flex align-items-center justify-content-center"><div class="tri-d"></div></div>
        </div>
      </div>
      <div class="hscr d-flex">
        <div class="scb d-flex align-items-center justify-content-center"><div class="tri-l"></div></div>
        <div class="scthumb thumb-d"></div>
        <div class="scb btn-r d-flex align-items-center justify-content-center"><div class="tri-r"></div></div>
      </div>
    </div>
  </div>

  <!-- taskbar -->
  <div class="taskbar d-flex align-items-start">
    <div class="startb d-flex align-items-center"><svg><use href="#b-win"/></svg>Пуск</div>
    <div class="ql ql1 d-flex align-items-center justify-content-center"><svg><use href="#b-disk"/></svg></div>
    <div class="ql d-flex align-items-center justify-content-center"><svg><use href="#b-wmp"/></svg></div>
    <div class="ql d-flex align-items-center justify-content-center"><svg><use href="#b-ie"/></svg></div>
    <div class="chev">»</div>
    <div class="tsk t1 d-flex align-items-center"><svg><use href="#b-fold"/></svg>CA</div>
    <div class="tsk t2 d-flex align-items-center"><svg><use href="#i-logo"/></svg>AllFusion Process ...</div>
    <div class="tsk t3 d-flex align-items-center"><svg><use href="#b-word"/></svg>Документ1 - Microsof...</div>
    <div class="rublk">RU</div>
    <div class="tsep"></div>
    <div class="tray d-flex align-items-center">
      <svg><use href="#s-1"/></svg><svg><use href="#s-2"/></svg><svg><use href="#s-3"/></svg><svg><use href="#s-4"/></svg>
      <div class="clock">17:42</div>
    </div>
  </div>
</div>
</body>
</html>
